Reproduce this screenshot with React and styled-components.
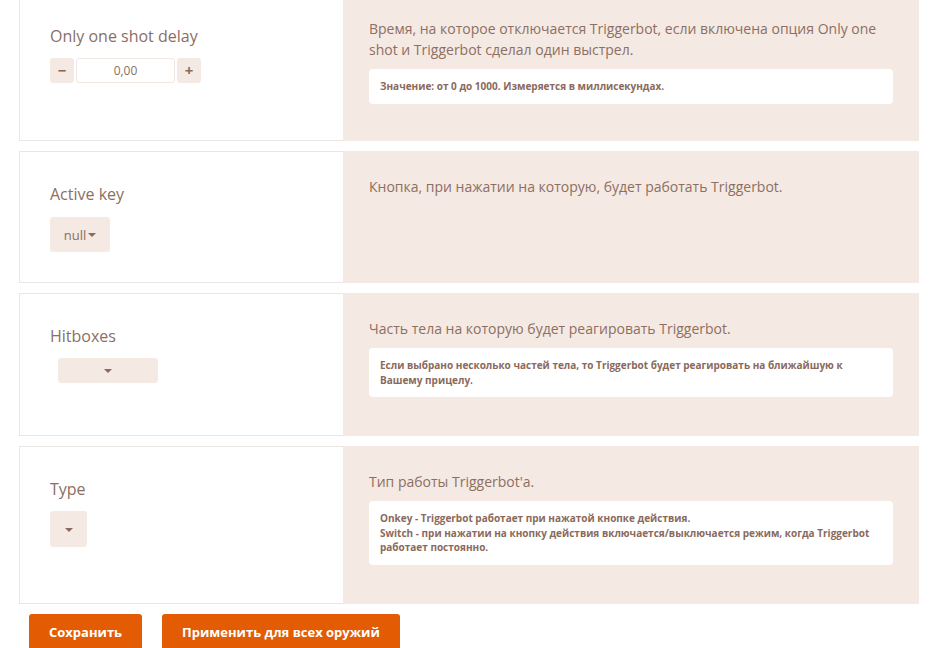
import React from "react";
import styled, { createGlobalStyle } from "styled-components";

const Global = createGlobalStyle`
  html, body { margin: 0; padding: 0; background: #fff; }
  body { font-family: "Open Sans", "Noto Sans", sans-serif; color: #8c6f62; overflow: hidden; }
  * { box-sizing: border-box; }
`;

const Page = styled.div`
  padding: 0 15px 0 19px;
  margin-top: -7px;
`;

const List = styled.div`
  display: flex;
  flex-direction: column;
  gap: 10px;
`;

const Card = styled.section`
  display: grid;
  grid-template-columns: 323px 1fr;
  border: 1px solid #ece6e2;
  border-right: none;
  min-height: ${(p) => p.$h}px;
  background: #fff;
`;

const Left = styled.div`
  padding: 31px 20px 20px 30px;
  display: flex;
  flex-direction: column;
  align-items: flex-start;
`;

const Label = styled.div`
  font-size: 16px;
  line-height: 22px;
  color: #8a6f64;
  margin-bottom: ${(p) => p.$gap}px;
`;

const Right = styled.div`
  background: #f5e9e3;
  padding: 25px 26px 30px 26px;
  margin: -1px 0;
`;

const Desc = styled.p`
  margin: 0;
  font-size: 14px;
  line-height: 21px;
  color: #8c6f62;
`;

const Note = styled.div`
  margin-top: 9px;
  background: #fff;
  border-radius: 4px;
  padding: 10px 11px;
  font-size: 10px;
  font-weight: 700;
  line-height: 14.5px;
  color: #8a6a5c;
`;

const Stepper = styled.div`
  display: flex;
  gap: 2px;
  align-items: stretch;
`;

const StepBtn = styled.button`
  width: 24px;
  height: 25px;
  border: none;
  border-radius: 3px;
  background: #f5e9e3;
  color: #8a6a5c;
  font-family: inherit;
  font-weight: 700;
  font-size: 15px;
  line-height: 1;
  padding: 0;
  display: flex;
  align-items: center;
  justify-content: center;
`;

const NumInput = styled.div`
  width: 99px;
  height: 25px;
  border: 1px solid #efe7e2;
  border-radius: 3px;
  background: #fff;
  font-size: 12px;
  color: #8c6f62;
  display: flex;
  align-items: center;
  justify-content: center;
`;

const Select = styled.div`
  display: flex;
  align-items: center;
  justify-content: center;
  gap: 2px;
  width: ${(p) => p.$w}px;
  height: ${(p) => p.$h}px;
  margin-left: ${(p) => p.$ml || 0}px;
  background: #f5e9e3;
  border-radius: 3px;
  font-size: 13px;
  color: #8c6f62;
`;

const Caret = styled.span`
  width: 0;
  height: 0;
  border-left: 4px solid transparent;
  border-right: 4px solid transparent;
  border-top: 4px solid #8a6a5c;
  margin-top: 1px;
`;

const Actions = styled.div`
  display: flex;
  gap: 20px;
  padding: 10px 0 0 10px;
`;

const Button = styled.button`
  height: 40px;
  padding: 0 20px 4px;
  border: none;
  border-radius: 3px;
  background: #e35c03;
  color: #fff;
  font-family: inherit;
  font-weight: 700;
  font-size: 13px;
`;

export default function App() {
  return (
    <>
      <Global />
      <Page>
        <List>
          <Card $h={148}>
            <Left>
              <Label $gap={11}>Only one shot delay</Label>
              <Stepper>
                <StepBtn>−</StepBtn>
                <NumInput>0,00</NumInput>
                <StepBtn>+</StepBtn>
              </Stepper>
            </Left>
            <Right>
              <Desc>
                Время, на которое отключается Triggerbot, если включена опция Only one
                shot и Triggerbot сделал один выстрел.
              </Desc>
              <Note>Значение: от 0 до 1000. Измеряется в миллисекундах.</Note>
            </Right>
          </Card>

          <Card $h={132}>
            <Left>
              <Label $gap={12}>Active key</Label>
              <Select $w={60} $h={35}>
                null <Caret />
              </Select>
            </Left>
            <Right>
              <Desc>Кнопка, при нажатии на которую, будет работать Triggerbot.</Desc>
            </Right>
          </Card>

          <Card $h={143}>
            <Left>
              <Label $gap={11}>Hitboxes</Label>
              <Select $w={100} $h={25} $ml={8}>
                <Caret />
              </Select>
            </Left>
            <Right>
              <Desc>Часть тела на которую будет реагировать Triggerbot.</Desc>
              <Note>
                Если выбрано несколько частей тела, то Triggerbot будет реагировать на ближайшую к
                Вашему прицелу.
              </Note>
            </Right>
          </Card>

          <Card $h={158}>
            <Left>
              <Label $gap={11}>Type</Label>
              <Select $w={37} $h={36}>
                <Caret />
              </Select>
            </Left>
            <Right>
              <Desc>Тип работы Triggerbot'a.</Desc>
              <Note>
                Onkey - Triggerbot работает при нажатой кнопке действия.
                <br />
                Switch - при нажатии на кнопку действия включается/выключается режим, когда Triggerbot
                работает постоянно.
              </Note>
            </Right>
          </Card>
        </List>
        <Actions>
          <Button>Сохранить</Button>
          <Button>Применить для всех оружий</Button>
        </Actions>
      </Page>
    </>
  );
}
